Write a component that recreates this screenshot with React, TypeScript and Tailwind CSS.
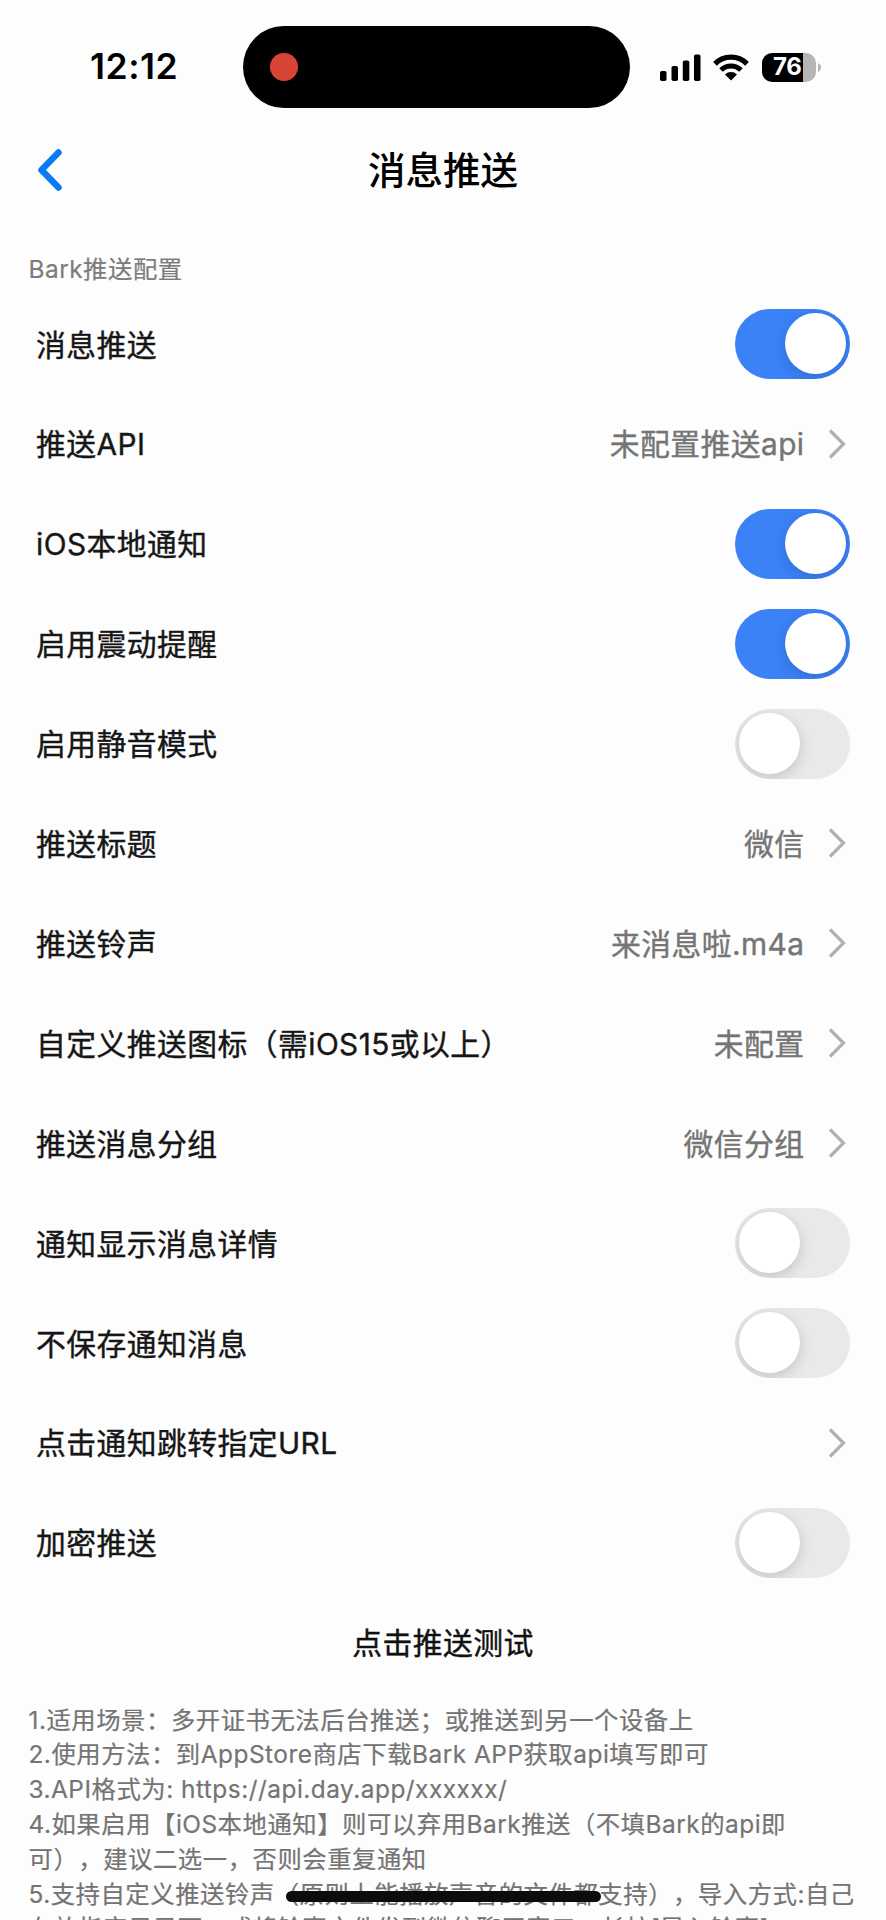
import React, { useState } from 'react';

interface SettingItem {
    id: string;
    label: string;
    type: 'switch' | 'link';
    on?: boolean;
    value?: string;
}

const SETTINGS: SettingItem[] = [
    { id: 'push', label: '消息推送', type: 'switch', on: true },
    { id: 'api', label: '推送API', type: 'link', value: '未配置推送api' },
    { id: 'local', label: 'iOS本地通知', type: 'switch', on: true },
    { id: 'vibrate', label: '启用震动提醒', type: 'switch', on: true },
    { id: 'silent', label: '启用静音模式', type: 'switch', on: false },
    { id: 'title', label: '推送标题', type: 'link', value: '微信' },
    { id: 'sound', label: '推送铃声', type: 'link', value: '来消息啦.m4a' },
    { id: 'icon', label: '自定义推送图标（需iOS15或以上）', type: 'link', value: '未配置' },
    { id: 'group', label: '推送消息分组', type: 'link', value: '微信分组' },
    { id: 'detail', label: '通知显示消息详情', type: 'switch', on: false },
    { id: 'nosave', label: '不保存通知消息', type: 'switch', on: false },
    { id: 'url', label: '点击通知跳转指定URL', type: 'link' },
    { id: 'encrypt', label: '加密推送', type: 'switch', on: false },
];

const NOTES = [
    '1.适用场景：多开证书无法后台推送；或推送到另一个设备上',
    '2.使用方法：到AppStore商店下载Bark APP获取api填写即可',
    '3.API格式为: https://api.day.app/xxxxxx/',
    '4.如果启用【iOS本地通知】则可以弃用Bark推送（不填Bark的api即',
    '可），建议二选一，否则会重复通知',
    '5.支持自定义推送铃声（原则上能播放声音的文件都支持），导入方式:自己',
    '存放指定目录下，或将铃声文件发到微信聊天窗口，长按[导入铃声]',
];

const StatusBar: React.FC = () => (
    <div className="flex h-[108px] shrink-0 items-end">
        <div className="flex h-[82px] w-full items-center">
            <div className="w-[242.5px] pl-[90px] text-[35.5px] font-semibold leading-none tracking-[0.5px]">12:12</div>
            {/* Dynamic island */}
            <div className="flex h-[82px] w-[387.5px] items-center rounded-full bg-black pl-[27px]">
                <div className="size-7 rounded-full bg-[#d84436]" />
            </div>
            <svg className="ml-[30px]" width="41" height="27" viewBox="0 0 41 27" fill="#000">
                <rect x="0" y="17" width="6.5" height="10" rx="1.8" />
                <rect x="11.5" y="12" width="6.5" height="15" rx="1.8" />
                <rect x="22.8" y="6.5" width="6.5" height="20.5" rx="1.8" />
                <rect x="34" y="0.5" width="6.5" height="26.5" rx="1.8" />
            </svg>
            <svg className="ml-[12px]" width="36" height="27" viewBox="0 0 36 27" fill="none" stroke="#000">
                <path d="M2 9.8 A22.6 22.6 0 0 1 34 9.8" strokeWidth="5.2" />
                <path d="M8 16 A14.2 14.2 0 0 1 28 16" strokeWidth="5" />
                <path d="M18 26.6 L12 20.6 A8.5 8.5 0 0 1 24 20.6 Z" fill="#000" stroke="none" />
            </svg>
            <div className="ml-[12.5px] flex items-center">
                <div className="flex h-[29px] w-[54px] items-center overflow-hidden rounded-[10px] bg-[linear-gradient(to_right,#000_41px,#b5b5b5_41px)] pl-[11.5px] text-[24px] font-bold leading-none tracking-[-0.3px] text-white">
                    76
                </div>
                <svg className="ml-[2px]" width="4" height="9" viewBox="0 0 4 9" fill="#b5b5b5">
                    <path d="M0 0 C4 2 4 7 0 9 Z" />
                </svg>
            </div>
        </div>
    </div>
);

const Switch: React.FC<{ on: boolean; onChange: () => void }> = ({ on, onChange }) => (
    <button
        role="switch"
        aria-checked={on}
        onClick={onChange}
        className={`flex h-[70px] w-[115px] items-center overflow-hidden rounded-full px-[4px] ${on ? 'justify-end bg-[#3b82f7]' : 'justify-start bg-[#e9e8ea]'}`}
    >
        <span className="size-[61px] rounded-full bg-white shadow-[0_4px_14px_rgba(0,0,0,0.16)]" />
    </button>
);

const App: React.FC = () => {
    const [items, setItems] = useState(SETTINGS);

    const toggle = (id: string) => {
        setItems(prev => prev.map(item => (item.id === id ? { ...item, on: !item.on } : item)));
    };

    return (
        <div className="flex h-[1920px] w-[886px] flex-col overflow-hidden bg-[#fdfdfd] font-['Inter','Noto_Sans_CJK_SC',sans-serif] text-black [text-spacing-trim:space-all]">
            <StatusBar />

            {/* Nav bar */}
            <div className="grid h-[124px] shrink-0 grid-cols-3 items-center">
                <button className="pl-[37px]">
                    <svg width="26" height="44" viewBox="0 0 26 44" fill="none" stroke="#0a7af5" strokeWidth="6.5" strokeLinecap="round" strokeLinejoin="round">
                        <path d="M21.5 4.5 L4.5 22 L21.5 39.5" />
                    </svg>
                </button>
                <h1 className="pt-[2px] text-center text-[37.5px] font-medium leading-none">消息推送</h1>
            </div>

            <div className="flex h-[62px] shrink-0 items-end pl-[28.5px] text-[24.4px] leading-[49px] tracking-[0.5px] text-[#7c7c7c] [-webkit-text-stroke:0.2px]">
                Bark推送配置
            </div>

            <div className="shrink-0 px-[36px] text-[29.8px] tracking-[0.45px] [-webkit-text-stroke:0.4px]">
                {items.map(item => (
                    <div key={item.id} className="flex h-[99.9px] items-center justify-between">
                        <span className="pt-[2px] text-[#161616]">{item.label}</span>
                        {item.type === 'switch' ? (
                            <Switch on={!!item.on} onChange={() => toggle(item.id)} />
                        ) : (
                            <div className="flex items-center gap-[23.5px] pr-[4px] text-[#757575]">
                                <span className="pt-[2px]">{item.value}</span>
                                <svg width="18" height="30" viewBox="0 0 18 30" fill="none" stroke="#b0b0b0" strokeWidth="3.2">
                                    <path d="M2 1.5 L15.5 15 L2 28.5" />
                                </svg>
                            </div>
                        )}
                    </div>
                ))}
                <button className="block h-[100px] w-full pt-[2px] text-center text-[#111]">点击推送测试</button>
            </div>

            <div className="relative mt-[10px] shrink-0 whitespace-nowrap pl-[28.5px] text-[24.4px] leading-[34.8px] tracking-[0.5px] text-[#747474] [-webkit-text-stroke:0.2px]">
                {NOTES.map((line, idx) => (
                    <p key={idx}>{line}</p>
                ))}
                {/* Home indicator */}
                <div className="absolute left-[286px] top-[188px] h-[11px] w-[315px] rounded-full bg-[#0c0c0c]" />
            </div>
        </div>
    );
};

export default App;
